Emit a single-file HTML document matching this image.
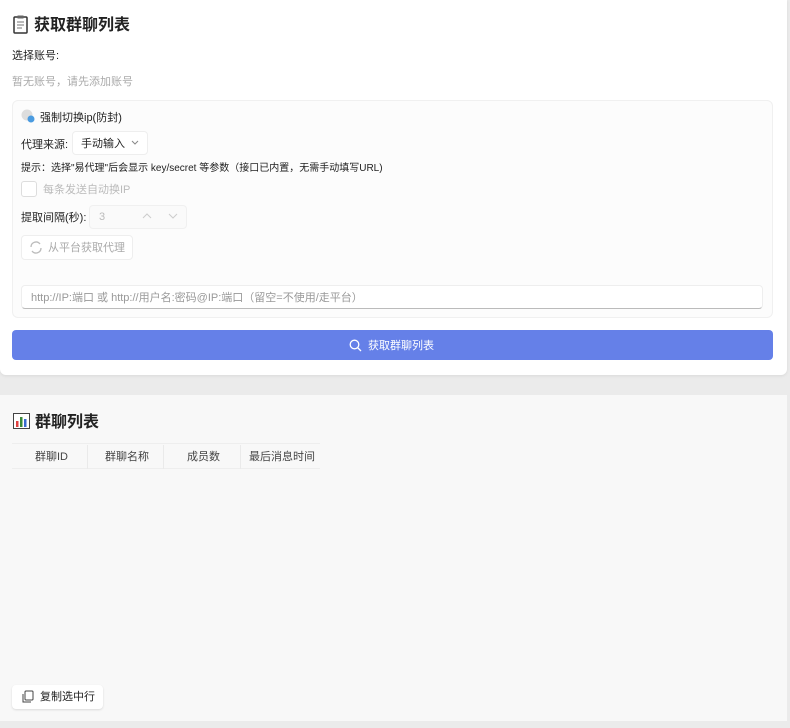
<!DOCTYPE html>
<html><head><meta charset="utf-8"><style>
*{box-sizing:border-box;margin:0;padding:0}
body{width:790px;height:728px;background:#ebebeb;font-family:"Liberation Sans","Noto Sans CJK SC",sans-serif;position:relative;overflow:hidden;color:#222}
.abs{position:absolute}
.card1{left:0;top:0;width:787px;height:375px;background:#fff;border-radius:0 0 6px 6px;box-shadow:0 1px 3px rgba(0,0,0,.08)}
.card2{left:0;top:395px;width:787px;height:326px;background:#f8f8f8}
.t{font-size:11px;white-space:nowrap;line-height:16px}
</style></head><body>
<div class="abs card1"></div>
<div class="abs card2"></div>
<svg class="abs" style="left:13px;top:15px" width="15" height="19" viewBox="0 0 15 19"><rect x="1" y="2" width="13" height="16" rx="1" fill="#fff" stroke="#333" stroke-width="1.5"/><rect x="4.5" y="0.5" width="6" height="3" fill="#666"/><path d="M4 7h7M4 10h7M4 13h5" stroke="#777"/></svg>
<div class="abs" style="left:34px;top:16px;font-size:16px;font-weight:bold;line-height:20px">获取群聊列表</div>
<div class="abs t" style="left:12px;top:48px">选择账号:</div>
<div class="abs t" style="left:12px;top:74px;color:#aaa">暂无账号，请先添加账号</div>
<div class="abs" style="left:12px;top:100px;width:761px;height:218px;background:#fcfcfc;border:1px solid #f0f0f0;border-radius:6px"></div>
<svg class="abs" style="left:21px;top:109px" width="14" height="14"><circle cx="6" cy="6" r="5.5" fill="#ddd"/><circle cx="10" cy="10" r="3.5" fill="#4a9be0"/></svg>
<div class="abs t" style="left:40px;top:110px">强制切换ip(防封)</div>
<div class="abs t" style="left:21px;top:137px">代理来源:</div>
<div class="abs" style="left:72px;top:131px;width:76px;height:24px;border:1px solid #eee;border-radius:4px;background:#fff"></div>
<div class="abs t" style="left:81px;top:136px">手动输入</div>
<svg class="abs" style="left:131px;top:140px" width="8" height="6"><path d="M1 1l3 3 3-3" stroke="#888" fill="none"/></svg>
<div class="abs" style="left:21px;top:162px;font-size:10px;white-space:nowrap;line-height:14px">提示：选择"易代理"后会显示 key/secret 等参数（接口已内置，无需手动填写URL)</div>
<div class="abs" style="left:21px;top:181px;width:16px;height:16px;border:1px solid #ddd;border-radius:3px;background:#fff"></div>
<div class="abs t" style="left:43px;top:182px;color:#bbb">每条发送自动换IP</div>
<div class="abs t" style="left:21px;top:210px">提取间隔(秒):</div>
<div class="abs" style="left:89px;top:205px;width:98px;height:24px;border:1px solid #f0f0f0;border-radius:4px;background:#fafafa"></div>
<div class="abs t" style="left:99px;top:209px;color:#bbb">3</div>
<svg class="abs" style="left:141px;top:212px" width="40" height="8"><path d="M2 6l4-4 4 4M28 2l4 4 4-4" stroke="#ccc" fill="none"/></svg>
<div class="abs" style="left:21px;top:235px;width:112px;height:25px;border:1px solid #eee;border-radius:4px;background:#fff"></div>
<svg class="abs" style="left:29px;top:241px" width="14" height="13"><path d="M2 6a5 5 0 0 1 9-3M12 7a5 5 0 0 1-9 3" stroke="#bbb" fill="none" stroke-width="1.3"/></svg>
<div class="abs t" style="left:48px;top:240px;color:#aaa">从平台获取代理</div>
<div class="abs" style="left:21px;top:285px;width:742px;height:24px;background:#fff;border:1px solid #eee;border-bottom:1px solid #bbb;border-radius:4px"></div>
<div class="abs t" style="left:31px;top:290px;color:#999">http://IP:端口 或 http://用户名:密码@IP:端口（留空=不使用/走平台）</div>
<div class="abs" style="left:12px;top:330px;width:761px;height:30px;background:#6580e8;border-radius:4px"></div>
<svg class="abs" style="left:349px;top:339px" width="13" height="13"><circle cx="5.5" cy="5.5" r="4.3" stroke="#fff" fill="none" stroke-width="1.3"/><path d="M8.5 8.5l3.5 3.5" stroke="#fff" stroke-width="1.3"/></svg>
<div class="abs t" style="left:368px;top:338px;color:#fff">获取群聊列表</div>
<svg class="abs" style="left:13px;top:413px" width="17" height="16"><rect x=".5" y=".5" width="16" height="15" fill="#fff" stroke="#444"/><rect x="3" y="8" width="2.5" height="6" fill="#e04040"/><rect x="7" y="4" width="2.5" height="10" fill="#3a8a3a"/><rect x="11" y="6" width="2.5" height="8" fill="#3a6ad0"/></svg>
<div class="abs" style="left:35px;top:413px;font-size:16px;font-weight:bold;line-height:20px">群聊列表</div>
<div class="abs" style="left:12px;top:443px;width:308px;height:26px;background:#f8f8f8;border-top:1px solid #eee;border-bottom:1px solid #eee"></div>
<div class="abs" style="left:87px;top:445px;width:1px;height:24px;background:#eaeaea"></div>
<div class="abs" style="left:163px;top:445px;width:1px;height:24px;background:#eaeaea"></div>
<div class="abs" style="left:240px;top:445px;width:1px;height:24px;background:#eaeaea"></div>
<div class="abs t" style="left:35px;top:449px;color:#444">群聊ID</div>
<div class="abs t" style="left:105px;top:449px;color:#444">群聊名称</div>
<div class="abs t" style="left:187px;top:449px;color:#444">成员数</div>
<div class="abs t" style="left:249px;top:449px;color:#444">最后消息时间</div>
<div class="abs" style="left:12px;top:685px;width:91px;height:24px;background:#fff;border-radius:4px;box-shadow:0 1px 2px rgba(0,0,0,.12)"></div>
<svg class="abs" style="left:21px;top:690px" width="13" height="14"><rect x="4" y="1" width="8" height="9" rx="1" fill="none" stroke="#444"/><path d="M2 4v8h8" fill="none" stroke="#444"/></svg>
<div class="abs t" style="left:40px;top:689px">复制选中行</div>
</body></html>
